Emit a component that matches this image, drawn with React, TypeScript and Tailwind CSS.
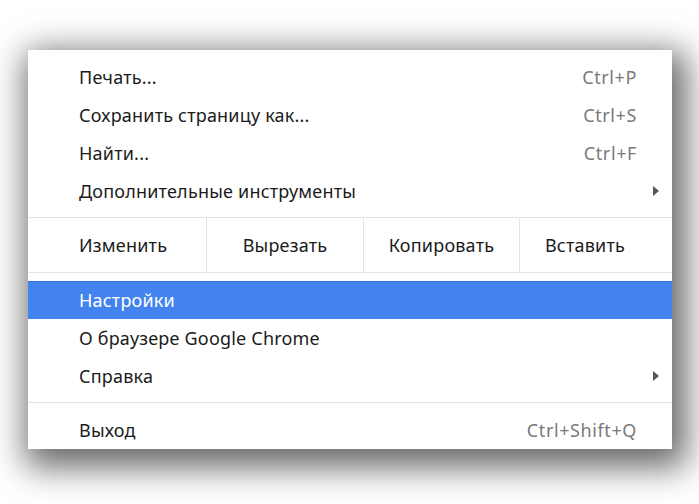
import { ReactNode } from 'react';

const font = { fontFamily: '"Noto Sans", "Open Sans", sans-serif' };

function Item({
  label,
  shortcut,
  submenu,
  active,
}: {
  label: string;
  shortcut?: string;
  submenu?: boolean;
  active?: boolean;
}) {
  return (
    <div
      className={`h-[38px] flex items-center pl-[51px] pr-[12px] text-[18px] ${
        active ? 'bg-[#4283ee] text-white border-t border-[#3a74d8]' : 'text-[#1b1b1b]'
      }`}
    >
      <span className="flex-1 tracking-[0.2px]">{label}</span>
      {shortcut && (
        <span className="text-[#7a7a7a] mr-[23px] tracking-[0.6px]">{shortcut}</span>
      )}
      {submenu && (
        <svg width="6" height="10" viewBox="0 0 6 10" className="mr-[1px]">
          <path d="M0 0 L6 5 L0 10 Z" fill="#555" />
        </svg>
      )}
    </div>
  );
}

function Sep() {
  return <div className="h-px bg-[#e3e3e3]" />;
}

function Cell({ children, className }: { children: ReactNode; className: string }) {
  return (
    <div className={`h-full flex items-center border-r border-[#e3e3e3] ${className}`}>
      {children}
    </div>
  );
}

export default function App() {
  return (
    <div className="w-[699px] h-[504px] bg-white pt-[50px] pl-[28px] overflow-hidden" style={font}>
      <div className="w-[644px] h-[399px] bg-white overflow-hidden shadow-[6px_10px_32px_8px_rgba(0,0,0,0.6)]">
        <div className="pt-[8px] pb-[7px]">
          <Item label="Печать..." shortcut="Ctrl+P" />
          <Item label="Сохранить страницу как..." shortcut="Ctrl+S" />
          <Item label="Найти..." shortcut="Ctrl+F" />
          <Item label="Дополнительные инструменты" submenu />
        </div>
        <Sep />
        {/* edit row: label + three buttons */}
        <div className="h-[54px] flex text-[18px] text-[#1b1b1b] tracking-[0.2px]">
          <Cell className="w-[179px] pl-[51px]">Изменить</Cell>
          <Cell className="w-[157px] justify-center">Вырезать</Cell>
          <Cell className="w-[156px] justify-center">Копировать</Cell>
          <div className="flex-1 h-full flex items-center justify-center pr-[22px]">Вставить</div>
        </div>
        <Sep />
        <div className="pt-[8px] pb-[7px]">
          <Item label="Настройки" active />
          <Item label="О браузере Google Chrome" />
          <Item label="Справка" submenu />
        </div>
        <Sep />
        <div className="pt-[8px]">
          <Item label="Выход" shortcut="Ctrl+Shift+Q" />
        </div>
      </div>
    </div>
  );
}
